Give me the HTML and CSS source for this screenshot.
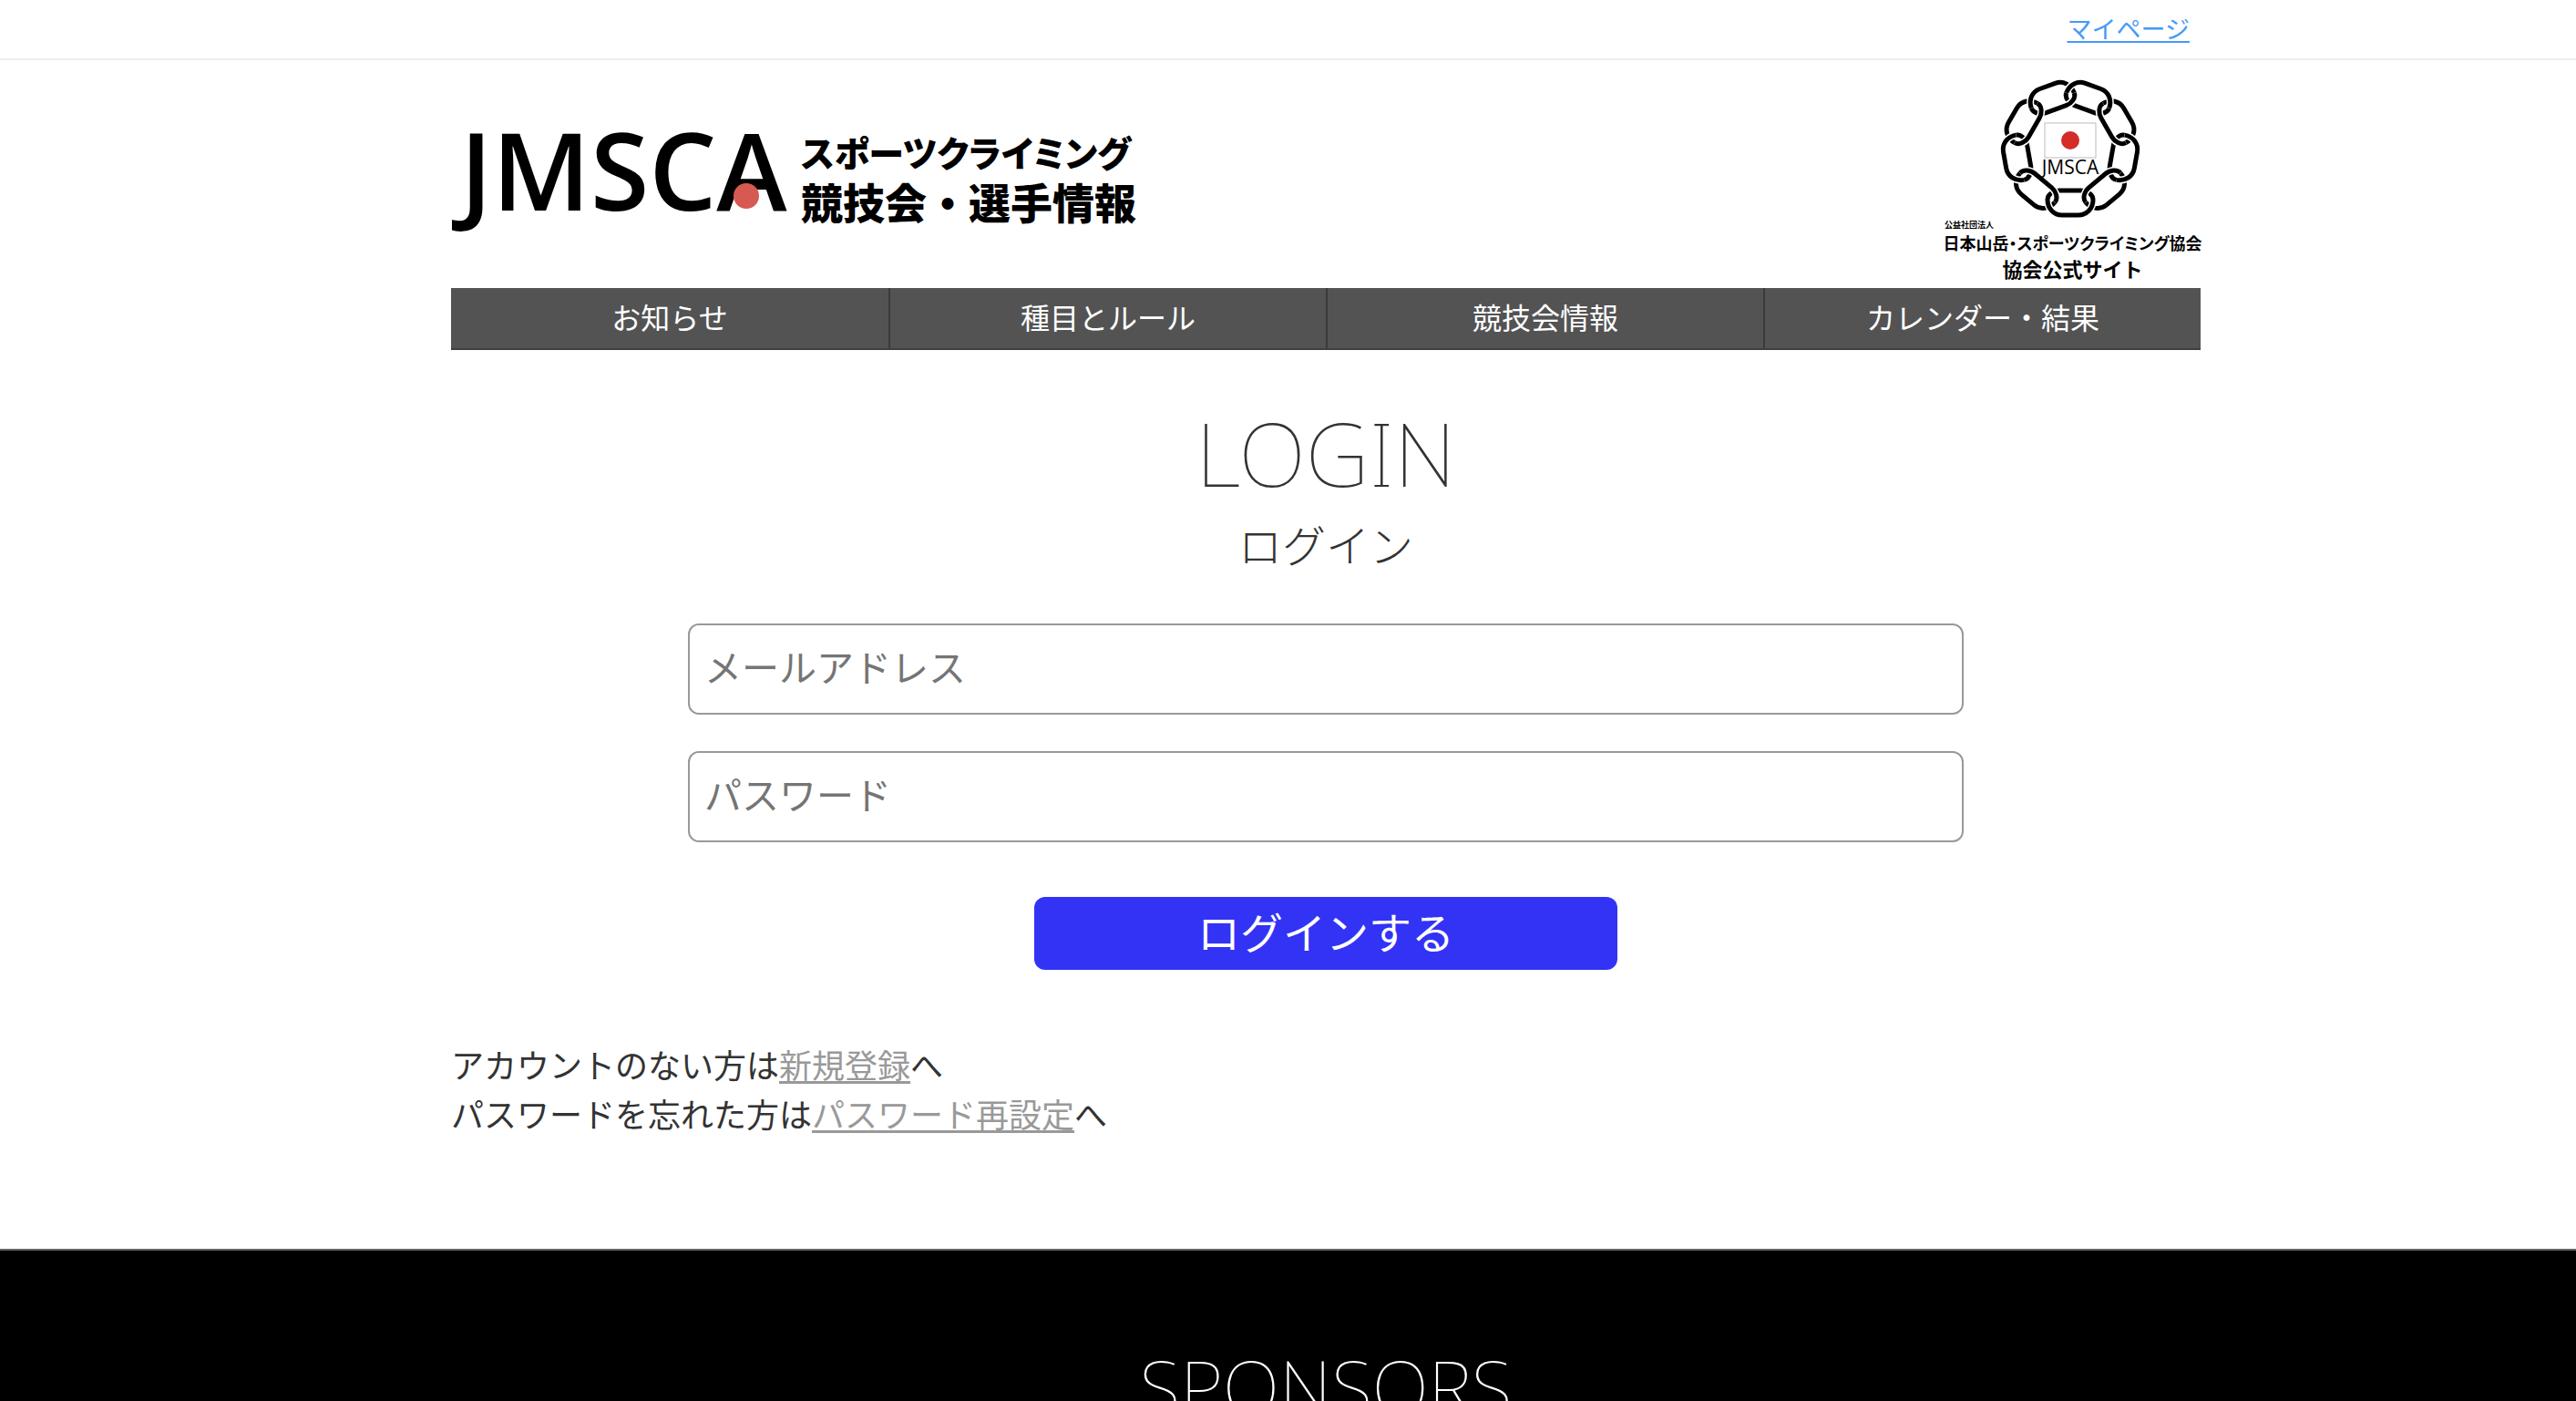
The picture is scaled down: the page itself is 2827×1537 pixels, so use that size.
FILE: index.html
```html
<!DOCTYPE html>
<html lang="ja">
<head>
<meta charset="utf-8">
<meta name="viewport" content="width=device-width, initial-scale=1">
<title>ログイン | JMSCA スポーツクライミング 競技会・選手情報</title>
<link rel="stylesheet" href="styles.css">
</head>
<body>
<div class="topbar">
  <div class="container topbar-inner"><a class="mypage" href="#">マイページ</a></div>
</div>
<header class="site-header">
  <div class="container">
    <div class="brand-row">
      <a class="brand" href="#">
        <svg class="wordmark" viewBox="0 0 372 104" role="img" aria-label="JMSCA">
          <text class="wordmark-text" x="10" y="92">JMSCA</text>
          <circle cx="324" cy="76" r="14" fill="#d65a52"/>
        </svg>
        <span class="brand-copy">
          <span class="brand-line brand-kana">スポーツクライミング</span>
          <span class="brand-line">競技会・選手情報</span>
        </span>
      </a>
      <a class="association" href="#">
        <svg class="emblem" viewBox="-78 -78 156 156" role="img" aria-label="JMSCA">
          <defs>
            <path id="outer" d="M-25 56C-25 66-18 73-9 73H9C18 73 25 66 25 56"/>
            <path id="inner" d="M-25 56C-25 50-18 46-12 46H12C18 46 25 50 25 56"/>
            <g id="o"><use href="#outer" class="halo"/><use href="#outer" class="link"/></g>
            <g id="i"><use href="#inner" class="halo"/><use href="#inner" class="link"/></g>
          </defs>
          <use href="#o" transform="rotate(120)"/><use href="#o" transform="rotate(40)"/>
          <use href="#o" transform="rotate(240)"/><use href="#o" transform="rotate(320)"/>
          <use href="#o" transform="rotate(160)"/><use href="#o" transform="rotate(200)"/>
          <use href="#o" transform="rotate(80)"/><use href="#o" transform="rotate(280)"/>
          <use href="#o"/>
          <use href="#i"/><use href="#i" transform="rotate(80)"/>
          <use href="#i" transform="rotate(280)"/><use href="#i" transform="rotate(200)"/>
          <use href="#i" transform="rotate(160)"/><use href="#i" transform="rotate(120)"/>
          <use href="#i" transform="rotate(40)"/><use href="#i" transform="rotate(240)"/>
          <use href="#i" transform="rotate(320)"/>
          <rect x="-28" y="-28" width="56" height="38" fill="#fff" stroke="#bbb"/>
          <circle cx="0" cy="-9" r="10" fill="#d42c28"/>
          <text class="emblem-text" x="0" y="28" text-anchor="middle">JMSCA</text>
        </svg>
        <span class="assoc-type">公益社団法人</span>
        <span class="assoc-name">日本山岳・スポーツクライミング協会</span>
        <span class="assoc-site">協会公式サイト</span>
      </a>
    </div>
    <nav class="nav">
      <a href="#">お知らせ</a>
      <a href="#">種目とルール</a>
      <a href="#">競技会情報</a>
      <a href="#">カレンダー・結果</a>
    </nav>
  </div>
</header>
<main class="login">
  <div class="container">
    <h1 class="title">LOGIN</h1>
    <p class="subtitle">ログイン</p>
    <form class="form">
      <input class="field" type="email" placeholder="メールアドレス" aria-label="メールアドレス">
      <input class="field" type="password" placeholder="パスワード" aria-label="パスワード">
      <button class="submit" type="submit">ログインする</button>
    </form>
    <p class="help">アカウントのない方は<a href="#">新規登録</a>へ<br>パスワードを忘れた方は<a href="#">パスワード再設定</a>へ</p>
  </div>
</main>
<footer class="sponsors">
  <div class="container"><h2 class="title title-small">SPONSORS</h2></div>
</footer>
</body>
</html>
```
FILE: styles.css
```css
* { box-sizing: border-box; }
html { background: #000; }
body {
  margin: 0;
  background: #fff;
  color: #333;
  font-family: "Noto Sans CJK JP", sans-serif;
}
.topbar, .site-header, .login, .sponsors { padding-left: 83px; }
.container { width: 100%; max-width: 1920px; margin: 0 auto; }
.topbar { border-bottom: 2px solid #eee; }
.topbar-inner {
  display: flex;
  justify-content: flex-end;
  padding: 0 12px 2px;
}
.mypage {
  color: #4499fb;
  font-size: 27px;
  line-height: 62px;
  text-underline-offset: 3px;
  text-decoration-thickness: 2px;
}
.brand-row {
  display: flex;
  justify-content: space-between;
  align-items: center;
  height: 250px;
}
.brand {
  display: flex;
  align-items: center;
  gap: 12px;
  color: #000;
  text-decoration: none;
}
.wordmark { width: 372px; height: 104px; overflow: visible; }
.wordmark-text {
  font-family: "Open Sans", sans-serif;
  font-size: 117px;
  font-weight: 600;
}
.brand-copy { display: flex; flex-direction: column; padding-top: 4px; }
.brand-line {
  font-size: 46px;
  font-weight: 900;
  line-height: 54px;
}
.brand-kana { font-size: 39px; font-feature-settings: "palt"; }
.association {
  display: flex;
  flex-direction: column;
  align-items: center;
  width: 281px;
  margin-top: 12px;
  color: #000;
  font-weight: 700;
  text-decoration: none;
  white-space: nowrap;
}
.emblem { width: 156px; height: 156px; margin-right: 6px; }
.halo, .link { fill: none; }
.halo { stroke: #fff; stroke-width: 8px; }
.link { stroke: #000; stroke-width: 5px; }
.emblem-text {
  font-family: "Open Sans", sans-serif;
  font-size: 21px;
  font-weight: 400;
}
.assoc-type { align-self: flex-start; font-size: 9px; line-height: 12px; }
.assoc-name { font-size: 18px; line-height: 26px; font-feature-settings: "palt"; }
.assoc-site { font-size: 22px; line-height: 30px; }
.nav {
  display: grid;
  grid-template-columns: repeat(4, 1fr);
  background: #535353;
  border-bottom: 2px solid #3f3f3f;
}
.nav a {
  padding-bottom: 4px;
  color: #fff;
  font-size: 32px;
  line-height: 62px;
  text-align: center;
  text-decoration: none;
}
.nav a + a { border-left: 2px solid #3a3a3a; }
.login {
  padding-top: 62px;
  padding-bottom: 122px;
}
.title {
  margin: 0;
  font-family: "Noto Sans", sans-serif;
  font-size: 97px;
  font-weight: 100;
  line-height: 100px;
  text-align: center;
}
.title-small { font-size: 82px; }
.subtitle {
  margin: 20px 0 0;
  font-size: 48px;
  font-weight: 300;
  line-height: 60px;
  text-align: center;
}
.form {
  display: flex;
  flex-direction: column;
  align-items: center;
  gap: 40px;
  padding-top: 58px;
}
.field {
  width: 100%;
  max-width: 1400px;
  height: 100px;
  padding: 0 16px 8px;
  border: 2px solid #999;
  border-radius: 12px;
  background: #fff;
  font: 41px "Noto Sans CJK JP", sans-serif;
}
.field::placeholder { color: #757575; }
.submit {
  width: 100%;
  max-width: 640px;
  height: 80px;
  margin-top: 20px;
  padding: 0 0 8px;
  border: 0;
  border-radius: 12px;
  background: #3333f5;
  color: #fff;
  font: 47px "Noto Sans CJK JP", sans-serif;
}
.help {
  margin: 76px 0 0;
  font-size: 36px;
  line-height: 54px;
}
.help a {
  color: #999;
  text-underline-offset: 3px;
  text-decoration-thickness: 3px;
}
.sponsors {
  padding-top: 98px;
  padding-bottom: 100px;
  border-top: 2px solid #666;
  background: #000;
  color: #fff;
}
```
